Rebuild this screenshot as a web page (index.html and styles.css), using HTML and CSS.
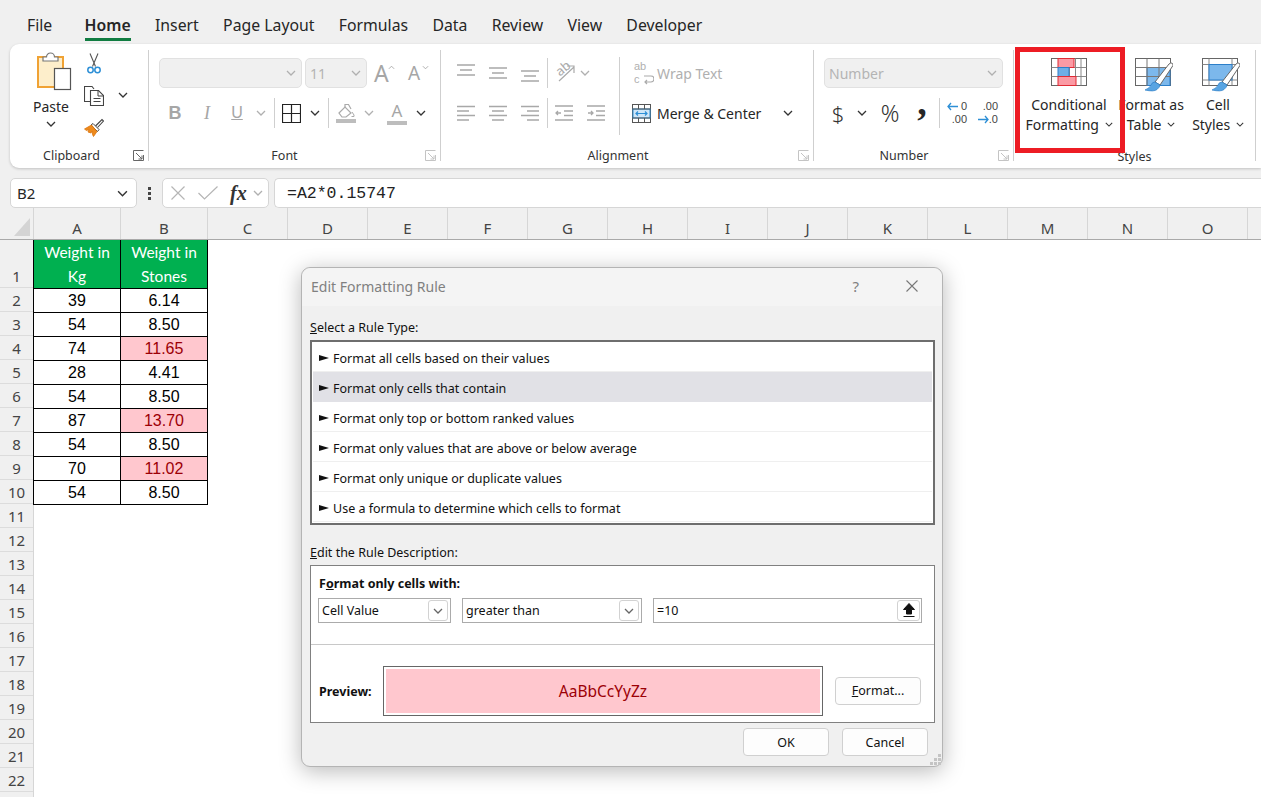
FILE: index.html
```html
<!DOCTYPE html>
<html lang="en">
<head>
  <meta charset="UTF-8">
  <title>Edit Formatting Rule</title>
  <link rel="stylesheet" href="styles.css">
</head>
<body>
  <svg class="defs" aria-hidden="true">
    <symbol id="chev" viewBox="0 0 10 6"><path d="M1 1l4 4 4-4" fill="none" stroke="currentColor" stroke-width="1.3"/></symbol>
    <symbol id="launch" viewBox="0 0 11 11"><path d="M.5 10.500V.5h10M.5 10.500h10V5M3 3l6 6M9 5.500V9H5.500" fill="none" stroke="currentColor"/></symbol>
    <symbol id="lines-l" viewBox="0 0 18 16"><path d="M0 1.500h18M0 6h12M0 10.500h18M0 15h12" stroke="currentColor" stroke-width="1.500"/></symbol>
    <symbol id="lines-c" viewBox="0 0 18 16"><path d="M0 1.500h18M3 6h12M0 10.500h18M3 15h12" stroke="currentColor" stroke-width="1.500"/></symbol>
    <symbol id="lines-r" viewBox="0 0 18 16"><path d="M0 1.500h18M6 6h12M0 10.500h18M6 15h12" stroke="currentColor" stroke-width="1.500"/></symbol>
    <symbol id="lines-t" viewBox="0 0 18 12"><path d="M0 1h18M3 6h12M0 11h18" stroke="currentColor" stroke-width="1.500"/></symbol>
  </svg>

  <nav class="tabs">
    <span class="tab tab-file">File</span>
    <span class="tab tab-active">Home</span>
    <span class="tab">Insert</span>
    <span class="tab">Page Layout</span>
    <span class="tab">Formulas</span>
    <span class="tab">Data</span>
    <span class="tab">Review</span>
    <span class="tab">View</span>
    <span class="tab">Developer</span>
  </nav>

  <section class="ribbon">
    <!-- clipboard -->
    <div class="group g-clip">
      <div class="group-body clip-body">
        <div class="paste">
          <svg class="ico-paste" width="36" height="39" viewBox="0 0 36 39">
            <rect x="2" y="5" width="25" height="30" fill="#fdeecb" stroke="#f0a234" stroke-width="2"/>
            <path d="M7 9V5h3.500a4 4 0 0 1 8 0H22v4z" fill="#fff" stroke="#777" stroke-width="1.200"/>
            <rect x="18.500" y="16.500" width="16" height="21" fill="#fff" stroke="#555" stroke-width="1.200"/>
          </svg>
          <span class="paste-label">Paste</span>
          <svg class="chev chev-dark"><use href="#chev"/></svg>
        </div>
        <div class="clip-tools">
          <svg width="14" height="21" viewBox="0 0 14 21">
            <path d="M3 .5l5.500 13M11 .5L5.500 13.500" fill="none" stroke="#555" stroke-width="1.100"/>
            <circle cx="3.500" cy="17" r="2.700" fill="none" stroke="#2d8fd6" stroke-width="1.500"/>
            <circle cx="10.500" cy="17" r="2.700" fill="none" stroke="#2d8fd6" stroke-width="1.500"/>
          </svg>
          <svg width="20" height="20" viewBox="0 0 20 20">
            <path d="M7 15.500H.5V.5h7.500L10 3" fill="none" stroke="#444" stroke-width="1.100"/>
            <path d="M6.500 4.500h8l5 5v10h-13z" fill="#fff" stroke="#444" stroke-width="1.100"/>
            <path d="M14 4.500v5.500h5.500M9.500 12.500h7M9.500 15.500h7" fill="none" stroke="#444"/>
          </svg>
          <svg width="20" height="19" viewBox="0 0 20 19">
            <path d="M11.500 8L18 1.500l1.500 1.500-6 6.500" fill="#fff" stroke="#444" stroke-width="1.100"/>
            <path d="M9 5.500l6 6-1.500 2L7 7z" fill="#fff" stroke="#444"/>
            <path d="M7.500 7L.5 11l2 1.500L5 11.500 4 14l3 1 1-2 .5 3.500 1 2 3.500-5z" fill="#ee8a1c" stroke="#d9730c" stroke-width=".8"/>
          </svg>
        </div>
        <svg class="chev chev-dark clip-chev"><use href="#chev"/></svg>
      </div>
      <div class="group-foot">
        <span class="group-label">Clipboard</span>
        <svg class="launch"><use href="#launch"/></svg>
      </div>
    </div>

    <!-- font -->
    <div class="group g-font">
      <div class="group-body">
        <div class="font-top">
          <div class="combo combo-font"><svg class="chev"><use href="#chev"/></svg></div>
          <div class="combo combo-size"><span>11</span><svg class="chev"><use href="#chev"/></svg></div>
          <span class="grow-a">A<svg class="chev-mini" viewBox="0 0 8 5"><path d="M1 4l3-3 3 3" fill="none" stroke="currentColor"/></svg></span>
          <span class="shrink-a">A<svg class="chev-mini" viewBox="0 0 8 5"><path d="M1 1l3 3 3-3" fill="none" stroke="currentColor"/></svg></span>
        </div>
        <div class="font-row">
          <b class="fmt fmt-b">B</b>
          <i class="fmt fmt-i">I</i>
          <span class="fmt fmt-u">U</span>
          <svg class="chev"><use href="#chev"/></svg>
          <span class="sep"></span>
          <svg width="19" height="19" viewBox="0 0 19 19"><path d="M.5 .5h18v18H.5zM9.500 .5v18M.5 9.500h18" fill="none" stroke="#222" stroke-width="1.200"/></svg>
          <svg class="chev chev-dark"><use href="#chev"/></svg>
          <span class="sep"></span>
          <svg width="20" height="20" viewBox="0 0 20 20">
            <path d="M3 10l6-6 6 6-5 4H6z" fill="none" stroke="#aaa" stroke-width="1.200"/>
            <path d="M9 4V1.500h3.500L15 6" fill="none" stroke="#aaa" stroke-width="1.200"/>
            <path d="M16 9l2 3v1.500h-2.500" fill="none" stroke="#aaa"/>
            <rect y="16" width="20" height="4" fill="#bdbdbd"/>
          </svg>
          <svg class="chev"><use href="#chev"/></svg>
          <span class="font-color">A</span>
          <svg class="chev chev-dark"><use href="#chev"/></svg>
        </div>
      </div>
      <div class="group-foot">
        <span class="group-label">Font</span>
        <svg class="launch launch-off"><use href="#launch"/></svg>
      </div>
    </div>

    <!-- alignment -->
    <div class="group g-align">
      <div class="group-body align-body">
        <div class="align-grid">
          <svg class="line line-top" width="18" height="12"><use href="#lines-t"/></svg>
          <svg class="line" width="18" height="12"><use href="#lines-t"/></svg>
          <svg class="line line-bottom" width="18" height="12"><use href="#lines-t"/></svg>
          <span class="sep"></span>
          <svg class="orient" width="21" height="20" viewBox="0 0 21 20">
            <path d="M5 18L20 4M13 3h7v7" fill="none" stroke="#aaa" stroke-width="1.200"/>
            <text x="2" y="13" class="orient-txt" transform="rotate(-40 5 8)">ab</text>
          </svg>
          <svg class="chev orient-chev"><use href="#chev"/></svg>
          <svg class="line" width="18" height="16"><use href="#lines-l"/></svg>
          <svg class="line" width="18" height="16"><use href="#lines-c"/></svg>
          <svg class="line" width="18" height="16"><use href="#lines-r"/></svg>
          <span class="sep"></span>
          <svg class="line" width="18" height="16" viewBox="0 0 18 16"><path d="M0 1h18M9 6h9M9 10.500h9M0 15h18M6 8H1M3 6L1 8l2 2" fill="none" stroke="currentColor" stroke-width="1.300"/></svg>
          <svg class="line" width="18" height="16" viewBox="0 0 18 16"><path d="M0 1h18M9 6h9M9 10.500h9M0 15h18M1 8h5M4 6l2 2-2 2" fill="none" stroke="currentColor" stroke-width="1.300"/></svg>
        </div>
        <span class="sep sep-tall"></span>
        <div class="wrap-col">
          <div class="wrap-row">
            <span class="wrap-ico"><span>ab</span><span>c</span><svg width="11" height="10" viewBox="0 0 11 10"><path d="M1 1h7a2.500 2.500 0 0 1 0 6H2M4 5L2 7l2 2" fill="none" stroke="#aaa" stroke-width="1.200"/></svg></span>
            <span class="wrap-text">Wrap Text</span>
          </div>
          <div class="merge-row">
            <svg width="19" height="19" viewBox="0 0 19 19">
              <rect x=".5" y=".5" width="18" height="18" fill="#fff" stroke="#555"/>
              <rect x="1" y="5" width="17" height="9" fill="#cfe6f8" stroke="#2d8fd6"/>
              <path d="M.5 5h18M.5 14h18M6.500 .5V5M12.500 .5V5M6.500 14v4.500M12.500 14v4.500" stroke="#555"/>
              <path d="M4 9.500h11M6 7.500l-2 2 2 2M13 7.500l2 2-2 2" fill="none" stroke="#2d8fd6" stroke-width="1.200"/>
            </svg>
            <span class="merge-text">Merge &amp; Center</span>
            <svg class="chev chev-dark"><use href="#chev"/></svg>
          </div>
        </div>
      </div>
      <div class="group-foot">
        <span class="group-label">Alignment</span>
        <svg class="launch launch-off"><use href="#launch"/></svg>
      </div>
    </div>

    <!-- number -->
    <div class="group g-number">
      <div class="group-body">
        <div class="combo combo-number"><span>Number</span><svg class="chev"><use href="#chev"/></svg></div>
        <div class="number-row">
          <span class="num-sym num-dollar">$</span>
          <svg class="chev chev-dark"><use href="#chev"/></svg>
          <span class="num-sym num-pct">%</span>
          <span class="num-comma">,</span>
          <span class="sep"></span>
          <span class="dec"><svg width="11" height="9" viewBox="0 0 11 9"><path d="M11 4.500H1M4 1L1 4.500 4 8" fill="none" stroke="#2d8fd6" stroke-width="1.300"/></svg><span class="dec-a">0</span><span class="dec-b">.00</span></span>
          <span class="dec dec-out"><span class="dec-c">.00</span><svg width="11" height="9" viewBox="0 0 11 9"><path d="M0 4.500h10M7 1l3 3.500L7 8" fill="none" stroke="#2d8fd6" stroke-width="1.300"/></svg><span class="dec-a">.0</span></span>
        </div>
      </div>
      <div class="group-foot">
        <span class="group-label">Number</span>
        <svg class="launch launch-off"><use href="#launch"/></svg>
      </div>
    </div>

    <!-- styles -->
    <div class="group g-styles">
      <div class="group-body styles-body">
        <div class="big-btn big-cond">
          <svg width="36" height="29" viewBox="0 0 36 29">
            <rect x=".5" y=".5" width="35" height="27" fill="#fff" stroke="#666"/>
            <path d="M.5 9.500h35M.5 18.500h35M7.500 .5v27M18.500 .5v27M24.500 .5v27M30 .5v27" stroke="#888" fill="none"/>
            <rect x="7" y=".5" width="16" height="9" fill="#fb9aa4" stroke="#e02b35"/>
            <rect x="7" y="9.500" width="11" height="9" fill="#6eaee6" stroke="#2c7fc9"/>
            <rect x="7" y="18.500" width="18" height="9" fill="#fb9aa4" stroke="#e02b35"/>
          </svg>
          <span class="big-label">Conditional<br>Formatting <svg class="chev chev-dark chev-inline"><use href="#chev"/></svg></span>
        </div>
        <div class="big-btn big-table">
          <svg width="38" height="34" viewBox="0 0 38 34">
            <rect x=".5" y=".5" width="35" height="27" fill="#fff" stroke="#666"/>
            <rect x="12" y="9.500" width="23" height="18" fill="#7cb8ec" stroke="#2c7fc9"/>
            <path d="M.5 9.500h35M.5 18.500h35M12 .5v27M24 .5v27" stroke="#777" fill="none"/>
            <path d="M20 24L34 6q2-2 3.500-.5t-.5 3.500L25 27z" fill="#fff" stroke="#666"/>
            <path d="M20 24q-3 0-4 3t-6 5q9 2 12-.5t3-4.500z" fill="#58a4e2" stroke="#2c7fc9" stroke-width=".7"/>
          </svg>
          <span class="big-label">Format as<br>Table <svg class="chev chev-dark chev-inline"><use href="#chev"/></svg></span>
        </div>
        <div class="big-btn big-cell">
          <svg width="38" height="34" viewBox="0 0 38 34">
            <rect x=".5" y=".5" width="35" height="27" fill="#fff" stroke="#666"/>
            <path d="M.5 6.500h35M.5 22h35M7 .5v27M30 .5v27" stroke="#888" fill="none"/>
            <rect x="7" y="6.500" width="23" height="15.500" fill="#7cb8ec" stroke="#2c7fc9"/>
            <path d="M20 24L34 6q2-2 3.500-.5t-.5 3.500L25 27z" fill="#fff" stroke="#666"/>
            <path d="M20 24q-3 0-4 3t-6 5q9 2 12-.5t3-4.500z" fill="#58a4e2" stroke="#2c7fc9" stroke-width=".7"/>
          </svg>
          <span class="big-label">Cell<br>Styles <svg class="chev chev-dark chev-inline"><use href="#chev"/></svg></span>
        </div>
      </div>
      <div class="group-foot">
        <span class="group-label">Styles</span>
      </div>
    </div>
  </section>

  <section class="formula-bar">
    <div class="name-box"><span>B2</span><svg class="chev chev-name"><use href="#chev"/></svg></div>
    <div class="fb-dots"><i></i><i></i><i></i></div>
    <div class="fx-box">
      <svg width="14" height="14" viewBox="0 0 14 14"><path d="M.5 .5l13 13M13.500 .5l-13 13" stroke="#b5b5b5" stroke-width="1.200"/></svg>
      <svg width="20" height="14" viewBox="0 0 20 14"><path d="M.5 7l6 6L19.500 .5" fill="none" stroke="#b5b5b5" stroke-width="1.200"/></svg>
      <span class="fx">fx</span>
      <svg class="chev"><use href="#chev"/></svg>
    </div>
    <div class="formula-input">=A2*0.15747</div>
  </section>

  <div class="col-heads">
    <div class="corner"><svg width="16" height="18" viewBox="0 0 16 18"><path d="M16 0v18H0z" fill="#d4d4d4"/></svg></div>
    <span class="col col-wide">A</span><span class="col col-wide">B</span>
    <span class="col">C</span><span class="col">D</span><span class="col">E</span><span class="col">F</span>
    <span class="col">G</span><span class="col">H</span><span class="col">I</span><span class="col">J</span>
    <span class="col">K</span><span class="col">L</span><span class="col">M</span><span class="col">N</span><span class="col">O</span>
  </div>

  <div class="sheet">
    <div class="row-heads">
      <span class="rh rh-first">1</span><span class="rh">2</span><span class="rh">3</span><span class="rh">4</span>
      <span class="rh">5</span><span class="rh">6</span><span class="rh">7</span><span class="rh">8</span>
      <span class="rh">9</span><span class="rh">10</span><span class="rh">11</span><span class="rh">12</span>
      <span class="rh">13</span><span class="rh">14</span><span class="rh">15</span><span class="rh">16</span>
      <span class="rh">17</span><span class="rh">18</span><span class="rh">19</span><span class="rh">20</span>
      <span class="rh">21</span><span class="rh">22</span>
    </div>
    <table class="data">
      <tr class="head"><td>Weight in Kg</td><td>Weight in Stones</td></tr>
      <tr><td>39</td><td>6.14</td></tr>
      <tr><td>54</td><td>8.50</td></tr>
      <tr><td>74</td><td class="hit">11.65</td></tr>
      <tr><td>28</td><td>4.41</td></tr>
      <tr><td>54</td><td>8.50</td></tr>
      <tr><td>87</td><td class="hit">13.70</td></tr>
      <tr><td>54</td><td>8.50</td></tr>
      <tr><td>70</td><td class="hit">11.02</td></tr>
      <tr><td>54</td><td>8.50</td></tr>
    </table>
  </div>

  <!-- red callout over the ribbon -->
  <div class="callout"></div>

  <!-- dialog -->
  <div class="dialog">
    <div class="dlg-title">
      <span class="dlg-name">Edit Formatting Rule</span>
      <span class="dlg-help">?</span>
      <svg class="dlg-close" width="12" height="12" viewBox="0 0 12 12"><path d="M.5 .5l11 11M11.500 .5l-11 11" stroke="#777" stroke-width="1.100"/></svg>
    </div>
    <div class="dlg-body">
      <label class="dlg-caption"><u>S</u>elect a Rule Type:</label>
      <ul class="rule-list">
        <li><span class="mark"></span>Format all cells based on their values</li>
        <li class="sel"><span class="mark"></span>Format only cells that contain</li>
        <li><span class="mark"></span>Format only top or bottom ranked values</li>
        <li><span class="mark"></span>Format only values that are above or below average</li>
        <li><span class="mark"></span>Format only unique or duplicate values</li>
        <li><span class="mark"></span>Use a formula to determine which cells to format</li>
      </ul>
      <label class="dlg-caption dlg-caption-2"><u>E</u>dit the Rule Description:</label>
      <div class="desc">
        <div class="desc-top">
          <div class="desc-head">F<u>o</u>rmat only cells with:</div>
          <div class="cond-row">
            <div class="sel-box sel-a"><span>Cell Value</span><span class="drop"><svg class="chev chev-thin"><use href="#chev"/></svg></span></div>
            <div class="sel-box sel-b"><span>greater than</span><span class="drop"><svg class="chev chev-thin"><use href="#chev"/></svg></span></div>
            <div class="sel-box sel-c"><span>=10</span><span class="drop drop-up"><svg width="12" height="15" viewBox="0 0 12 15"><path d="M6 .5L11.500 6.500H8.500V11h-5V6.500H.5zM.5 13.500h11" fill="#111" stroke="#111"/></svg></span></div>
          </div>
        </div>
        <div class="desc-bottom">
          <b class="prev-label">Preview:</b>
          <div class="preview"><span>AaBbCcYyZz</span></div>
          <span class="btn btn-format"><u>F</u>ormat...</span>
        </div>
      </div>
      <div class="dlg-actions">
        <span class="btn">OK</span>
        <span class="btn">Cancel</span>
      </div>
    </div>
    <svg class="grip" width="12" height="12" viewBox="0 0 12 12"><path d="M8 0h3v3H8zM4 4h3v3H4zM8 4h3v3H8zM0 8h3v3H0zM4 8h3v3H4zM8 8h3v3H8z" fill="#c4c4c4"/></svg>
  </div>
</body>
</html>
```

FILE: styles.css
```css
*{
  box-sizing: border-box;
  margin: 0;
  padding: 0;
}
html, body{
  height: 797px;
  overflow: hidden;
}
body{
  position: relative;
  background: #f0f0f0;
  font-family: "Noto Sans", "Open Sans", sans-serif;
  color: #262626;
}
.defs{
  display: none;
}
svg{
  display: block;
  flex: none;
}

/* tabs */
.tabs{
  display: flex;
  gap: 24.300px;
  height: 44px;
  padding-left: 27px;
  font-size: 15.800px;
}
.tab{
  line-height: 50px;
  height: 41px;
  white-space: nowrap;
}
.tab-file{
  margin-right: 8px;
}
.tab-active{
  font-weight: 600;
  border-bottom: 3px solid #107c41;
}

/* ribbon */
.ribbon{
  display: flex;
  height: 124px;
  margin-left: 10px;
  padding-top: 6px;
  background: #fff;
  border-radius: 9px 0 0 9px;
  box-shadow: 0 1px 3px rgba(0,0,0,.2);
}
.group{
  display: flex;
  flex-direction: column;
  height: 111px;
  border-right: 1px solid #cfcfcf;
}
.g-clip{ width: 139px; }
.g-font{ width: 292px; padding-left: 10px; }
.g-align{ width: 373px; padding-left: 9px; }
.g-number{ width: 200px; padding-left: 10px; }
.g-styles{ width: 242px; padding-left: 12px; }
.group-body{
  flex: 1;
  min-height: 0;
}
.group-foot{
  display: flex;
  align-items: center;
  flex: none;
  height: 22px;
  padding-right: 4px;
  padding-top: 10px;
}
.group-label{
  flex: 1;
  text-align: center;
  font-size: 12.500px;
  color: #333;
}
.g-styles .group-foot{
  margin-left: -12px;
  padding-right: 0;
  padding-top: 12px;
}
.g-font .group-label{ margin-left: -15px; }
.g-align .group-label{ margin-left: -12px; }
.g-number .group-label{ margin-left: -14px; }
.launch{
  width: 11px;
  height: 11px;
  color: #666;
}
.launch-off{
  color: #c4c4c4;
}
.chev{
  width: 10px;
  height: 6px;
  color: #b0b0b0;
}
.chev-dark{
  color: #333;
}
.sep{
  display: block;
  width: 1px;
  height: 30px;
  background: #cfcfcf;
}

/* clipboard */
.clip-body{
  display: grid;
  grid-template-columns: 46px 40px 18px;
  padding-left: 18px;
}
.paste{
  display: flex;
  flex-direction: column;
  align-items: center;
}
.ico-paste{
  margin-top: 2px;
  margin-left: 6px;
}
.paste-label{
  margin-top: 6px;
  font-size: 14px;
  line-height: 20px;
}
.paste .chev{
  margin-top: 4px;
}
.clip-tools{
  display: flex;
  flex-direction: column;
  align-items: center;
  gap: 12px;
  padding-top: 3px;
}
.clip-chev{
  align-self: start;
  justify-self: center;
  margin-top: 42px;
}

/* combos */
.combo{
  display: flex;
  align-items: center;
  justify-content: flex-end;
  height: 30px;
  padding: 0 5px 0 4px;
  background: #f0f0f0;
  border: 1px solid #e1e1e1;
  border-radius: 5px;
  color: #b4b4b4;
  font-size: 14px;
}
.combo span{
  flex: 1;
}
.combo-font{ width: 143px; }
.combo-size{ width: 62px; }
.combo-number{
  width: 179px;
  margin-top: 8px;
}

/* font */
.font-top{
  display: flex;
  align-items: center;
  gap: 3px;
  height: 30px;
  margin-top: 8px;
}
.grow-a, .shrink-a{
  position: relative;
  display: block;
  color: #a6a6a6;
  line-height: 24px;
}
.grow-a{
  margin-left: 4px;
  width: 31px;
  font-size: 23px;
}
.shrink-a{
  width: 24px;
  font-size: 19px;
}
.chev-mini{
  position: absolute;
  top: 4px;
  left: 14px;
  width: 7px;
  height: 5px;
}
.font-row{
  display: grid;
  grid-template-columns: 32px 32px 28px 20px 6px 28px 20px 6px 30px 16px 40px 8px;
  place-items: center;
  height: 30px;
  margin-top: 10px;
}
.fmt{
  color: #a6a6a6;
  font-size: 16px;
  font-family: "Liberation Sans", sans-serif;
}
.fmt-b{
  font-size: 18px;
}
.fmt-i{
  font-family: "Liberation Serif", serif;
  font-size: 18px;
}
.fmt-u{
  text-decoration: underline;
  font-size: 16px;
}
.font-color{
  width: 20px;
  height: 24px;
  border-bottom: 4px solid #bdbdbd;
  color: #a6a6a6;
  font-size: 17px;
  line-height: 20px;
  text-align: center;
}

/* alignment */
.align-body{
  display: flex;
}
.align-grid{
  display: grid;
  grid-template-columns: 32px 32px 32px 2px 32px 32px;
  grid-template-rows: 30px 30px;
  row-gap: 10px;
  place-items: center;
  height: 70px;
  margin-top: 8px;
}
.line{
  color: #a8a8a8;
}
.line-top{
  margin-top: -6px;
}
.line-bottom{
  margin-top: 6px;
}
.orient{
  overflow: visible;
}
.orient-txt{
  font-size: 13px;
  fill: #aaa;
}
.orient-chev{
  justify-self: start;
}
.sep-tall{
  height: 78px;
  margin: 7px 0 0 7px;
}
.wrap-col{
  margin-left: 12px;
  font-size: 14px;
}
.wrap-row{
  display: flex;
  align-items: center;
  height: 30px;
  margin-top: 8px;
  color: #b0b0b0;
}
.wrap-ico{
  position: relative;
  display: block;
  width: 18px;
  height: 25.400px;
  margin-left: 2px;
  font-family: "Liberation Sans", sans-serif;
  font-size: 11px;
  line-height: 12.700px;
}
.wrap-ico span{
  display: block;
}
.wrap-ico svg{
  position: absolute;
  right: -2px;
  bottom: 1px;
}
.wrap-text{
  margin-left: 5px;
}
.merge-row{
  display: flex;
  align-items: center;
  height: 30px;
  margin-top: 10px;
}
.merge-text{
  width: 126px;
  margin-left: 6px;
}

/* number */
.number-row{
  display: grid;
  grid-template-columns: 28px 20px 36px 28px 6px 30px 32px;
  place-items: center;
  height: 30px;
  margin-top: 10px;
}
.num-sym{
  color: #333;
  font-weight: 300;
  line-height: 30px;
}
.num-dollar{
  font-size: 22px;
}
.num-pct{
  font-size: 23px;
}
.num-comma{
  height: 30px;
  margin-top: -22px;
  font-family: "Liberation Serif", serif;
  font-weight: 700;
  font-size: 38px;
  line-height: 30px;
}
.dec{
  position: relative;
  display: block;
  width: 20px;
  height: 25.400px;
  color: #444;
  font-family: "Liberation Sans", sans-serif;
  font-size: 11px;
  line-height: 12.700px;
}
.dec svg{
  position: absolute;
  left: 0;
  top: 2px;
}
.dec-a{
  position: absolute;
  right: 0;
  top: 0;
}
.dec-b{
  position: absolute;
  right: 0;
  bottom: 0;
}
.dec-out svg{
  top: auto;
  bottom: 2px;
}
.dec-out .dec-a{
  top: auto;
  bottom: 0;
}
.dec-c{
  position: absolute;
  right: 0;
  top: 0;
}

/* styles */
.styles-body{
  display: grid;
  grid-template-columns: 86px 78px 56px;
}
.big-btn{
  display: flex;
  flex-direction: column;
  align-items: center;
  padding-top: 8px;
}
.big-cond svg:first-child{
  margin-bottom: 8px;
}
.big-table svg:first-child, .big-cell svg:first-child{
  margin: 0 -2px 3px 4px;
}
.big-label{
  font-size: 14px;
  line-height: 20px;
  text-align: center;
  white-space: nowrap;
}
.chev-inline{
  display: inline-block;
  width: 8px;
  height: 5px;
  margin: 0 0 3px 2px;
}

/* formula bar */
.formula-bar{
  display: flex;
  height: 30px;
  margin: 10px 0 0 10px;
}
.name-box, .fx-box, .formula-input{
  display: flex;
  align-items: center;
  background: #fff;
  border: 1px solid #d6d6d6;
  border-radius: 5px;
}
.name-box{
  justify-content: space-between;
  width: 127px;
  padding: 0 8px 0 6px;
  font-size: 15px;
}
.chev-name{
  width: 11px;
  height: 7px;
  color: #333;
}
.fb-dots{
  display: flex;
  flex-direction: column;
  justify-content: center;
  gap: 2px;
  width: 25px;
  padding-left: 11px;
}
.fb-dots i{
  display: block;
  width: 3px;
  height: 3px;
  background: #444;
}
.fx-box{
  width: 107px;
  padding-left: 8px;
}
.fx-box svg:nth-child(2){
  margin-left: 13px;
}
.fx{
  width: 35px;
  padding-left: 12px;
  font-family: "Liberation Serif", serif;
  font-style: italic;
  font-size: 20px;
  font-weight: 700;
  color: #333;
}
.formula-input{
  flex: 1;
  margin-left: 5px;
  padding-left: 12px;
  border-right: 0;
  border-radius: 5px 0 0 5px;
  font-family: "Liberation Mono", monospace;
  font-size: 16.500px;
  color: #222;
}

/* sheet */
.col-heads{
  display: flex;
  height: 32px;
  border-bottom: 1px solid #a9a9a9;
  background: #f0f0f0;
}
.corner{
  display: flex;
  justify-content: flex-end;
  align-items: flex-end;
  width: 34px;
  padding: 0 3px 3px 0;
  border-right: 1px solid #d6d6d6;
}
.col{
  width: 80px;
  flex: none;
  border-right: 1px solid #d6d6d6;
  color: #444;
  font-size: 15px;
  line-height: 40px;
  height: 31px;
  text-align: center;
}
.col-wide{
  width: 87px;
}
.sheet{
  display: flex;
  height: 557px;
  background: #fff;
}
.row-heads{
  display: flex;
  flex-direction: column;
  flex: none;
  width: 34px;
  background: #f0f0f0;
  border-right: 1px solid #d6d6d6;
}
.rh{
  display: block;
  flex: none;
  height: 24px;
  border-bottom: 1px solid #dcdcdc;
  color: #444;
  font-size: 15px;
  line-height: 24px;
  text-align: center;
}
.rh-first{
  height: 48px;
  padding-top: 24px;
}
.data{
  align-self: flex-start;
  margin-left: -1px;
  border-collapse: collapse;
  table-layout: fixed;
  width: 175px;
  font-family: "Liberation Sans", sans-serif;
  font-size: 16px;
  color: #000;
}
.data td{
  width: 87px;
  height: 24px;
  padding: 0;
  border: 1px solid #000;
  text-align: center;
}
.data .head td{
  height: 48px;
  padding: 0 8px;
  border-top: 0;
  background: #00b050;
  color: #fff;
  font-family: "Lato", sans-serif;
  font-size: 15.500px;
  line-height: 24px;
}
.data .hit{
  background: #ffc7ce;
  color: #9c0006;
}

/* callout */
.callout{
  position: absolute;
  left: 1015px;
  top: 47px;
  width: 110px;
  height: 106px;
  border: 5px solid #ed1c24;
}

/* dialog */
.dialog{
  position: absolute;
  left: 301px;
  top: 267px;
  width: 642px;
  height: 500px;
  background: #f0f0f0;
  border: 1px solid #b4b4b4;
  border-radius: 9px;
  box-shadow: 0 4px 22px rgba(0,0,0,.28);
  font-size: 12px;
  color: #111;
}
.dlg-title{
  display: flex;
  align-items: center;
  height: 38px;
  padding: 0 24px 2px 9px;
  background: #f4f4f4;
  border-radius: 9px 9px 0 0;
  color: #808080;
}
.dlg-name{
  flex: 1;
  font-size: 14px;
}
.dlg-help{
  margin-right: 47px;
  font-size: 15px;
}
.dlg-body{
  display: flex;
  flex-direction: column;
  padding: 14px 7px 0 8px;
}
.dlg-caption{
  display: block;
  height: 20px;
  line-height: 16px;
  font-size: 12.500px;
}
.dlg-caption-2{
  margin-top: 20px;
}
.rule-list{
  display: flex;
  flex-direction: column;
  list-style: none;
  width: 625px;
  height: 185px;
  padding: 0 1px;
  background: #fff;
  border: 2px solid #6e6e6e;
}
.rule-list li{
  display: flex;
  flex: none;
  align-items: center;
  height: 30px;
  padding: 3px 0 0 6px;
  border-bottom: 1px solid #efefef;
  font-size: 12.500px;
}
.rule-list .sel{
  background: #e1e1e6;
  border-bottom-color: #e1e1e6;
}
.mark{
  display: block;
  width: 0;
  height: 0;
  margin-right: 4px;
  border-left: 10px solid #111;
  border-top: 3px solid transparent;
  border-bottom: 3px solid transparent;
}
.desc{
  width: 625px;
  height: 158px;
  background: #fff;
  border: 1px solid #808080;
}
.desc-top{
  height: 79px;
  padding: 9px 8px 0 7px;
  border-bottom: 1px solid #c8c8c8;
}
.desc-head{
  height: 23px;
  margin-left: 1px;
  font-weight: 700;
  font-size: 12.500px;
}
.cond-row{
  display: flex;
  gap: 11px;
}
.sel-box{
  display: flex;
  align-items: center;
  justify-content: space-between;
  height: 25px;
  padding: 0 2px 0 3px;
  border: 1px solid #ababab;
  font-size: 12.500px;
}
.sel-a{ width: 133px; }
.sel-b{ width: 180px; }
.sel-c{ width: 269px; padding-right: 1px; }
.drop{
  display: flex;
  align-items: center;
  justify-content: center;
  width: 20px;
  height: 21px;
  background: #fff;
  border: 1px solid #d2d2d2;
  border-radius: 3px;
}
.drop-up{
  width: 23px;
}
.chev-thin{
  color: #666;
}
.desc-bottom{
  display: flex;
  align-items: center;
  height: 77px;
  padding: 21px 13px 6px 8px;
}
.prev-label{
  width: 64px;
  font-size: 12.500px;
}
.preview{
  width: 440px;
  height: 50px;
  padding: 2px;
  background: #fff;
  border: 1px solid #666;
}
.preview span{
  display: block;
  height: 100%;
  background: #ffc7ce;
  color: #9c0006;
  font-size: 15.500px;
  line-height: 44px;
  text-align: center;
}
.btn{
  display: block;
  flex: none;
  width: 86px;
  height: 28px;
  background: #fdfdfd;
  border: 1px solid #d0d0d0;
  border-radius: 4px;
  font-size: 12.500px;
  line-height: 26px;
  text-align: center;
}
.btn-format{
  margin-left: 12px;
}
.dlg-actions{
  display: flex;
  justify-content: flex-end;
  gap: 13px;
  margin-top: 5px;
  padding-right: 7px;
}
.dlg-actions .btn{
  line-height: 27px;
}
.grip{
  position: absolute;
  right: 0;
  bottom: 0;
}
```
